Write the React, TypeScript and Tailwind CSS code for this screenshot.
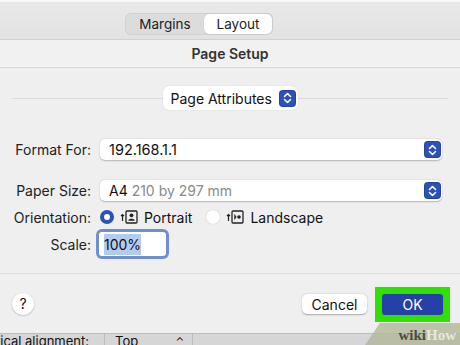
import React from "react";

const font = { fontFamily: "Inter, 'Noto Sans', sans-serif" };

function Stepper({ size = 17 }: { size?: number }) {
  return (
    <span
      className="flex items-center justify-center rounded-[4px] bg-[#2a52b8] shadow-[inset_0_0_0_1px_rgba(0,0,0,0.15)]"
      style={{ width: size, height: size }}
    >
      <svg width="9" height="12" viewBox="0 0 9 12" fill="none" stroke="white" strokeWidth="1.6" strokeLinecap="round" strokeLinejoin="round">
        <path d="M1.5 4.5 L4.5 1.5 L7.5 4.5" />
        <path d="M1.5 7.5 L4.5 10.5 L7.5 7.5" />
      </svg>
    </span>
  );
}

function Row({ label, children, className = "" }: { label: string; children: React.ReactNode; className?: string }) {
  return (
    <div className={"flex items-center " + className}>
      <span className="w-[79px] whitespace-nowrap text-right text-[14px] text-[#222]">{label}</span>
      <div className="ml-[9px] flex flex-1 items-center">{children}</div>
    </div>
  );
}

function PortraitIcon() {
  return (
    <svg width="18" height="16" viewBox="0 0 18 16" fill="none">
      <path d="M2.5 12 V5.5 M1 7 L2.5 5.5 L4 7" stroke="#222" strokeWidth="1.2" />
      <rect x="6" y="2" width="11" height="12" rx="1" stroke="#222" strokeWidth="1.3" />
      <circle cx="11.5" cy="6.3" r="1.9" fill="#222" />
      <path d="M8.3 11.8 C8.6 9.2 14.4 9.2 14.7 11.8 Z" fill="#222" />
    </svg>
  );
}

function LandscapeIcon() {
  return (
    <svg width="18" height="16" viewBox="0 0 18 16" fill="none">
      <path d="M2.5 12 V5.5 M1 7 L2.5 5.5 L4 7" stroke="#222" strokeWidth="1.2" />
      <rect x="6" y="2" width="11" height="12" rx="1" stroke="#222" strokeWidth="1.3" />
      <circle cx="13" cy="8" r="1.8" fill="#222" />
      <path d="M8.3 4.8 L10.6 8 L8.3 11.2 Z" fill="#222" />
    </svg>
  );
}

export default function App() {
  return (
    <div className="relative flex h-[345px] w-[460px] flex-col overflow-hidden bg-[#efefef]" style={font}>
      {/* tab strip */}
      <div className="h-[40px] border-t-[2px] border-t-[#f8f8f8] bg-gradient-to-b from-[#e9e9e9] to-[#e2e2e2] border-b border-b-[#d2d2d2] pl-[125px] pt-[11px]">
        <div className="flex h-[22px] w-[148px] items-center rounded-[6px] bg-[#dcdcdc] p-[1px] shadow-[inset_0_0_0_1px_rgba(0,0,0,0.05)]">
          <span className="flex-1 text-center text-[13.5px] text-[#222]">Margins</span>
          <span className="flex h-[20px] w-[68px] items-center justify-center rounded-[5px] bg-white text-[13.5px] text-[#222] shadow-[0_0_1px_rgba(0,0,0,0.3)]">
            Layout
          </span>
        </div>
      </div>

      {/* title */}
      <div className="flex h-[28px] items-center justify-center border-b border-[#d8d8d8] bg-[#f1f1f1] text-[14px] font-semibold text-[#333]">
        Page Setup
      </div>

      {/* body */}
      <div className="flex flex-col pl-[12px] pr-[18px] pt-[18px]">
        <div className="flex h-[24px] items-center">
          <span className="h-px flex-1 bg-[#dadada]" />
          <div className="flex h-[24px] w-[135px] items-center justify-between rounded-[6px] bg-white pl-[8px] pr-[2px] shadow-[0_0_1px_rgba(0,0,0,0.2)]">
            <span className="whitespace-nowrap text-[14px] text-[#111]">Page Attributes</span>
            <Stepper />
          </div>
          <span className="mr-[-6px] h-px flex-1 bg-[#dadada]" />
        </div>

        <Row label="Format For:" className="mt-[29px] h-[21px]">
          <div className="flex h-[21px] flex-1 items-center justify-between rounded-[5px] bg-white pl-[9px] pr-[1px] shadow-[0_0.5px_1.5px_rgba(0,0,0,0.25)]">
            <span className="text-[14.5px] text-[#111]">192.168.1.1</span>
            <Stepper />
          </div>
        </Row>

        <Row label="Paper Size:" className="mt-[20px] h-[21px]">
          <div className="flex h-[21px] flex-1 items-center justify-between rounded-[5px] bg-white pl-[9px] pr-[1px] shadow-[0_0.5px_1.5px_rgba(0,0,0,0.25)]">
            <span className="text-[14px] text-[#111]">
              A4 <span className="text-[#8a8a8a]">210 by 297 mm</span>
            </span>
            <Stepper />
          </div>
        </Row>

        <Row label="Orientation:" className="mt-[6px] h-[20px]">
          <span className="flex h-[14px] w-[14px] items-center justify-center rounded-full bg-[#2a52b8]">
            <span className="h-[6px] w-[6px] rounded-full bg-white" />
          </span>
          <span className="ml-[6px] flex">
            <PortraitIcon />
          </span>
          <span className="ml-[6px] text-[14px] text-[#111]">Portrait</span>
          <span className="ml-[14px] h-[14px] w-[14px] rounded-full bg-white shadow-[0_0_1px_rgba(0,0,0,0.3)]" />
          <span className="ml-[6px] flex">
            <LandscapeIcon />
          </span>
          <span className="ml-[6px] text-[14px] text-[#111]">Landscape</span>
        </Row>

        <Row label="Scale:" className="mt-[5px] h-[24px]">
          <div className="ml-[-1px] flex h-[24px] w-[67px] items-center rounded-[3px] bg-white pl-[5px] shadow-[0_0_0_3px_#6f8fcf]">
            <span className="bg-[#b4cbf0] text-[14px] text-[#111]">100%</span>
          </div>
        </Row>
      </div>

      <div className="mt-[17px] border-t border-[#dcdcdc]" />

      {/* footer */}
      <div className="flex h-[59px] items-center pl-[12px] pr-[10px]">
        <span className="flex h-[22px] w-[22px] items-center justify-center rounded-full bg-white text-[14px] text-[#111] shadow-[0_0.5px_1.5px_rgba(0,0,0,0.3)]">
          ?
        </span>
        <span className="ml-auto mt-[1px] flex h-[20px] w-[65px] items-center justify-center rounded-[5px] bg-white text-[14px] text-[#111] shadow-[0_0.5px_1.5px_rgba(0,0,0,0.3)]">
          Cancel
        </span>
        <span className="ml-[8px] mt-[1px] flex h-[35px] w-[75px] items-center justify-center bg-[#2fe000]">
          <span className="flex h-[21px] w-[61px] items-center justify-center rounded-[3px] bg-[#2540a6] text-[14px] text-white">
            OK
          </span>
        </span>
      </div>

      {/* window behind */}
      <div className="flex h-[12px] items-start overflow-hidden border-t border-[#bdbdbd] bg-[#d6d6d6]">
        <span className="ml-[-4px] w-[109px] whitespace-nowrap border-r border-[#bbb] text-[13px] leading-[15px] text-[#111]">tical alignment:</span>
        <span className="flex w-[88px] justify-between border-r border-[#bbb] pl-[10px] pr-[8px] text-[13px] leading-[15px] text-[#111]">
          <span>Top</span>
          <span className="text-[11px]">⌃</span>
        </span>
      </div>

      {/* wikiHow watermark */}
      <div className="absolute bottom-0 right-0 flex h-[22px] w-[95px] items-end justify-end bg-[#b3b79a]/80 pr-[4px] [clip-path:polygon(15px_0,100%_0,100%_100%,0_100%)]">
        <span className="text-[15px] font-bold leading-[20px]" style={{ fontFamily: "'Liberation Serif', serif" }}>
          <span className="text-[#4b4b40]">wiki</span>
          <span className="text-[#e8e8dc]">How</span>
        </span>
      </div>
    </div>
  );
}
